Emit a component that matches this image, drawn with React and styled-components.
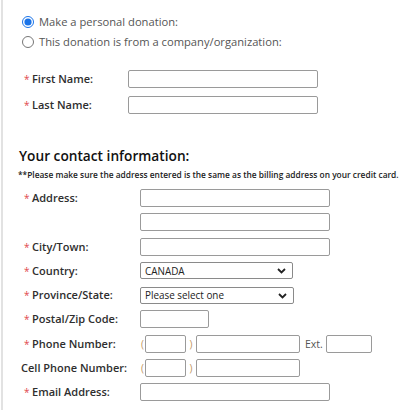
import React from "react";
import styled, { createGlobalStyle } from "styled-components";

const Global = createGlobalStyle`
  html, body { margin: 0; padding: 0; background: #fff; }
  body { font-family: "Open Sans", "Liberation Sans", sans-serif; color: #333; }
  * { box-sizing: border-box; }
`;

const Page = styled.div`
  margin-left: 1px;
  border-left: 2px solid #e2e2e2;
  min-height: 410px;
  padding: 13px 0 0 0;
`;

const RadioGroup = styled.div`
  display: flex;
  flex-direction: column;
  gap: 3px;
  padding-left: 19px;
`;

const RadioLabel = styled.label`
  display: flex;
  align-items: center;
  gap: 5px;
  font-size: 11.2px;
  color: #555;
  line-height: 17px;
`;

const Radio = styled.input.attrs({ type: "radio" })`
  margin: 0;
  width: 12px;
  height: 12px;
  accent-color: #1a73e8;
`;

const Fields = styled.div`
  display: flex;
  flex-direction: column;
  gap: ${(p) => p.$gap}px;
  padding-left: 18px;
  margin-top: ${(p) => p.$top}px;
`;

const Row = styled.div`
  display: flex;
  align-items: center;
  height: 18px;
`;

const Label = styled.div`
  width: ${(p) => p.$w}px;
  flex: none;
  font-size: 11px;
  font-weight: 600;
  color: #2e2e2e;
  display: flex;
  align-items: center;
  line-height: 18px;
`;

const Star = styled.span`
  color: #e0474c;
  font-size: 10px;
  font-weight: 400;
  width: 6px;
  margin: 0 2px 0 3px;
`;

const Input = styled.input`
  width: ${(p) => p.$w}px;
  flex: none;
  height: 18px;
  border: 1px solid #9a9a9a;
  border-radius: 2px;
  margin: 0;
  padding: 0 3px;
  font: inherit;
  background: #fff;
`;

const SelectBox = styled.div`
  position: relative;
  width: ${(p) => p.$w}px;
  height: 17px;
  border: 1px solid #8a8a8a;
  border-radius: 2px;
  display: flex;
  align-items: center;
  padding-left: 4px;
  font-size: 9.9px;
  color: #222;
`;

const Chevron = styled.svg`
  position: absolute;
  right: 6px;
  top: 5px;
`;

const Heading = styled.h2`
  margin: 32px 0 0 0;
  padding-left: 16px;
  font-size: 13.7px;
  font-weight: 600;
  color: #111;
  line-height: 20px;
`;

const Note = styled.p`
  margin: 2.5px 0 0 0;
  padding-left: 15px;
  font-size: 8.4px;
  font-weight: 600;
  color: #222;
  line-height: 11px;
  white-space: nowrap;
`;

const Paren = styled.span`
  flex: none;
  color: #c09460;
  font-size: 10px;
  width: ${(p) => p.$w}px;
  text-align: center;
`;

const Ext = styled.span`
  color: #555;
  font-size: 10.5px;
  margin: 0 3px 0 5px;
`;

function Select({ w, value }) {
  return (
    <SelectBox $w={w}>
      {value}
      <Chevron width="9" height="6" viewBox="0 0 9 6">
        <path d="M1 1l3.5 3.5L8 1" fill="none" stroke="#222" strokeWidth="1.8" />
      </Chevron>
    </SelectBox>
  );
}

function Phone({ ext }) {
  return (
    <>
      <Paren $w={5}>(</Paren>
      <Input $w={41} />
      <Paren $w={10}>)</Paren>
      <Input $w={104} />
      {ext && (
        <>
          <Ext>Ext.</Ext>
          <Input $w={46} />
        </>
      )}
    </>
  );
}

function L({ w, req = true, children }) {
  return (
    <Label $w={w}>
      {req && <Star>*</Star>}
      {children}
    </Label>
  );
}

export default function App() {
  return (
    <>
      <Global />
      <Page>
        <RadioGroup>
          <RadioLabel>
            <Radio name="d" defaultChecked />
            Make a personal donation:
          </RadioLabel>
          <RadioLabel>
            <Radio name="d" />
            This donation is from a company/organization:
          </RadioLabel>
        </RadioGroup>

        <Fields $gap={8} $top={20}>
          <Row>
            <L w={107}>First Name:</L>
            <Input $w={190} />
          </Row>
          <Row>
            <L w={107}>Last Name:</L>
            <Input $w={190} />
          </Row>
        </Fields>

        <Heading>Your contact information:</Heading>
        <Note>**Please make sure the address entered is the same as the billing address on your credit card.</Note>

        <Fields $gap={6.25} $top={9.5}>
          <Row>
            <L w={119}>Address:</L>
            <Input $w={190} />
          </Row>
          <Row>
            <Label $w={119} />
            <Input $w={190} />
          </Row>
          <Row>
            <L w={119}>City/Town:</L>
            <Input $w={190} />
          </Row>
          <Row>
            <L w={119}>Country:</L>
            <Select w={153} value="CANADA" />
          </Row>
          <Row>
            <L w={119}>Province/State:</L>
            <Select w={154} value="Please select one" />
          </Row>
          <Row>
            <L w={119}>Postal/Zip Code:</L>
            <Input $w={69} />
          </Row>
          <Row>
            <L w={119}>Phone Number:</L>
            <Phone ext />
          </Row>
          <Row>
            <L w={119} req={false}>Cell Phone Number:</L>
            <Phone />
          </Row>
          <Row>
            <L w={119}>Email Address:</L>
            <Input $w={190} />
          </Row>
        </Fields>
      </Page>
    </>
  );
}
